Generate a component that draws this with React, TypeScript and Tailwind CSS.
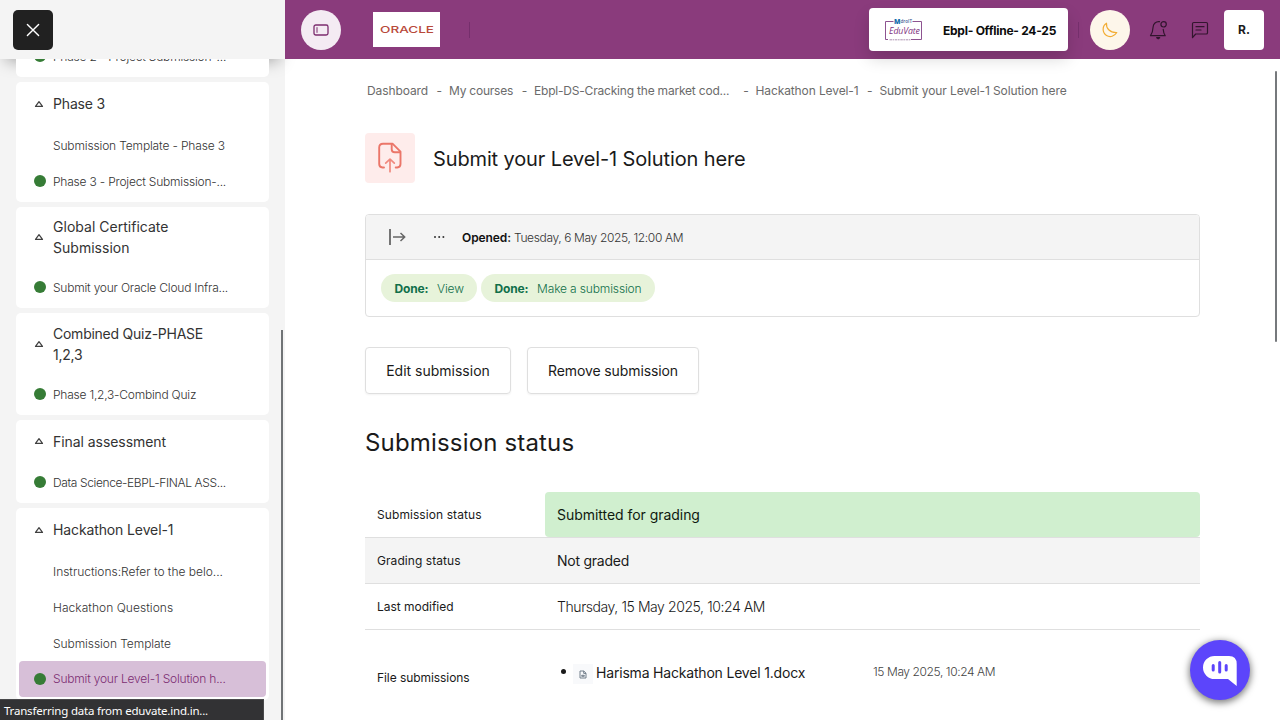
import type { ReactNode } from "react";

type Item = { text: string; track: string; done?: boolean; active?: boolean };
type Section = { title: string[]; track: string; head: string; items: Item[] };

const sections: Section[] = [
  {
    title: ["Phase 3"],
    track: "tracking-[-0.17px]",
    head: "h-[45.5px]",
    items: [
      { text: "Submission Template - Phase 3", track: "tracking-[-0.15px]" },
      { text: "Phase 3 - Project Submission-...", track: "tracking-[-0.2px]", done: true },
    ],
  },
  {
    title: ["Global Certificate", "Submission"],
    track: "tracking-[0.02px]",
    head: "h-[62.5px]",
    items: [{ text: "Submit your Oracle Cloud Infra...", track: "tracking-[-0.21px]", done: true }],
  },
  {
    title: ["Combined Quiz-PHASE", "1,2,3"],
    track: "tracking-[-0.25px]",
    head: "h-[63px]",
    items: [{ text: "Phase 1,2,3-Combind Quiz", track: "tracking-[-0.22px]", done: true }],
  },
  {
    title: ["Final assessment"],
    track: "tracking-[-0.06px]",
    head: "h-[44.5px]",
    items: [{ text: "Data Science-EBPL-FINAL ASS...", track: "tracking-[-0.38px]", done: true }],
  },
  {
    title: ["Hackathon Level-1"],
    track: "tracking-[-0.12px]",
    head: "h-[45.5px]",
    items: [
      { text: "Instructions:Refer to the belo...", track: "tracking-[-0.01px]" },
      { text: "Hackathon Questions", track: "tracking-[0.04px]" },
      { text: "Submission Template", track: "tracking-[-0.06px]" },
      { text: "Submit your Level-1 Solution h...", track: "tracking-[-0.2px]", done: true, active: true },
    ],
  },
];

function NavItem({ item }: { item: Item }) {
  return (
    <div
      className={
        "mx-[3px] flex h-[35.75px] items-center rounded pl-[15px] text-[12px] font-light whitespace-nowrap " +
        (item.active ? "bg-[#d7bfd8] text-[#7c2d72]" : "text-[#333333]")
      }
    >
      <span className="flex w-[19px] shrink-0">
        {item.done && <span className="size-3 rounded-full bg-[#367c36]" />}
      </span>
      <span className={(item.active ? "" : "pt-[2px] ") + item.track}>{item.text}</span>
    </div>
  );
}

function NavSection({ section }: { section: Section }) {
  return (
    <section className="shrink-0 rounded-[5px] bg-white pb-[3px]">
      <div className={"flex items-center pb-[2px] pl-[18px] text-[14px] leading-[21px] text-[#333333] " + section.head}>
        <svg className="mr-[9px] shrink-0" width="10" height="8" viewBox="0 0 10 8" fill="none" stroke="#404040" strokeWidth="1.2" strokeLinejoin="round">
          <path d="M5 1.7 8.5 6.4H1.5Z" />
        </svg>
        <h2 className={section.track}>
          {section.title.map((line) => (
            <span key={line} className="block">{line}</span>
          ))}
        </h2>
      </div>
      {section.items.map((item) => (
        <NavItem key={item.text} item={item} />
      ))}
    </section>
  );
}

function Sidebar() {
  return (
    <aside className="relative flex h-full w-[285px] shrink-0 flex-col bg-[#f4f4f4]">
      <div className="h-[59px] shrink-0 bg-[#f4f4f4] px-[13px] pt-[10px] shadow-[0_8px_16px_-6px_rgba(0,0,0,0.35)]">
        <button className="flex size-10 items-center justify-center rounded-[5px] bg-[#212121]">
          <svg width="14" height="14" viewBox="0 0 14 14" stroke="#fff" strokeWidth="1.4" strokeLinecap="round">
            <path d="M1.4 1.4l11.2 11.2M12.6 1.4L1.4 12.6" />
          </svg>
        </button>
      </div>
      <nav className="relative flex min-h-0 flex-1 flex-col gap-[5px] overflow-hidden pr-4 pl-4">
        <section className="-mt-[21px] shrink-0 rounded-[5px] bg-white pb-[3px]">
          <NavItem item={{ text: "Phase 2 - Project Submission-...", track: "tracking-[-0.2px]", done: true }} />
        </section>
        {sections.map((s) => (
          <NavSection key={s.title[0]} section={s} />
        ))}
      </nav>
      <div className="absolute top-[330px] right-[2px] h-[390px] w-[2px] bg-[#707376]" />
      <div className="absolute bottom-0 left-0 z-20 flex h-[21px] w-[264px] items-center border-t border-r border-[#48484a] bg-[#323234] pt-[2px] pl-1 font-['Noto_Sans',sans-serif] text-[11.5px] tracking-[-0.2px] whitespace-nowrap text-white">
        Transferring data from eduvate.ind.in...
      </div>
    </aside>
  );
}

function EduVateLogo() {
  return (
    <svg width="40" height="26" viewBox="0 0 40 26" fill="none">
      <path d="M9.500 4.500H1.500V22.500H4M27 22.500h10.500V4.500H28.500" stroke="#8d5390" strokeWidth="1" />
      <text x="10" y="6.600" fontFamily="Open Sans, sans-serif" fontSize="6.500" fontWeight="800" fill="#1670ad" textLength="6.500" lengthAdjust="spacingAndGlyphs">M</text>
      <text x="16.500" y="6.400" fontFamily="Open Sans, sans-serif" fontSize="5.800" fontWeight="600" fill="#3c5a94" textLength="11.500" lengthAdjust="spacingAndGlyphs">droIT</text>
      <text x="5" y="16.600" fontFamily="Open Sans, sans-serif" fontSize="8.800" fontStyle="italic" fill="#7e3180" textLength="31" lengthAdjust="spacing">EduVate</text>
      <path d="M5.500 22.800h21" stroke="#a487a8" strokeWidth="0.900" strokeDasharray="2.500 0.600 1.600 0.700" />
    </svg>
  );
}

function TopBar() {
  return (
    <header className="z-10 flex h-[59px] shrink-0 items-center bg-[#8a3b7c] pr-4 pl-4">
      <button className="flex size-10 items-center justify-center rounded-full bg-[#f4ebf3]">
        <svg width="16" height="12" viewBox="0 0 16 12" fill="none" stroke="#7c2d6f" strokeWidth="1.3">
          <rect x="1" y="1" width="14" height="10" rx="1.8" />
          <path d="M4 3.200v5.600" strokeWidth="1" />
        </svg>
      </button>
      <div className="ml-8 flex h-[35px] w-[67px] items-center justify-center bg-white">
        <svg width="56" height="12" viewBox="0 0 56 12">
          <text x="1" y="9.300" fontFamily="Inter, sans-serif" fontSize="9.300" fontWeight="500" fill="#b8493a" textLength="54" lengthAdjust="spacingAndGlyphs">ORACLE</text>
        </svg>
      </div>
      <div className="ml-[29px] h-4 w-px bg-[#752f6c]" />
      <div className="ml-auto flex h-[43px] w-[199px] items-center rounded bg-white pl-[15px] shadow-[0_8px_16px_rgba(0,0,0,0.15)]">
        <EduVateLogo />
        <span className="ml-[19px] pt-[2px] text-[12px] font-bold tracking-[-0.25px] whitespace-nowrap text-[#0c0c0c]">Ebpl- Offline- 24-25</span>
      </div>
      <div className="ml-[10px] h-4 w-px bg-[#752f6c]" />
      <button className="ml-[11px] flex size-10 items-center justify-center rounded-full bg-[#fdf6ea]">
        <svg width="18" height="18" viewBox="0 0 18 18" fill="none" stroke="#f2ac33" strokeWidth="1.2" strokeLinejoin="round" strokeLinecap="round">
          <path d="M5.500 2.200C5 7 8.500 11.800 15.800 11.500 13.500 15.200 9.200 16.700 5.500 14.500 1 11.700 1 5 5.500 2.200Z" />
        </svg>
      </button>
      <svg className="ml-[19px]" width="20" height="20" viewBox="0 0 20 20" fill="none" stroke="#32152e" strokeWidth="1.2" strokeLinecap="round" strokeLinejoin="round">
        <path d="M10.500 1.700C6.800 1.200 4.300 4 4.100 7 3.900 11.500 3.100 13.500 1.500 15.700H16.200C14.900 14 14.400 12 14.200 9.300" />
        <circle cx="14.600" cy="4.300" r="2.700" />
        <path d="M7.700 17.700h3L9.200 18.800Z" />
      </svg>
      <svg className="mr-px ml-[22px]" width="18" height="18" viewBox="0 0 18 18" fill="none" stroke="#32152e" strokeWidth="1.2" strokeLinecap="round" strokeLinejoin="round">
        <path d="M1.500 16.700V2.800Q1.500 1.500 2.800 1.500H15.200Q16.500 1.500 16.500 2.800V11.700Q16.500 13 15.200 13H4.700L1.500 16.700ZM5 5.700h8M5 9h5" />
      </svg>
      <div className="ml-[14px] flex size-10 items-center justify-center rounded-[4px] bg-white pt-px text-[12px] font-bold text-[#1c1c1c]">R.</div>
    </header>
  );
}

function Pill({ label, width }: { label: string; width: string }) {
  return (
    <span className={"flex h-7 items-center rounded-full bg-[#e7f3da] pt-[2px] pl-[13.5px] text-[12px] whitespace-nowrap text-[#11704a] " + width}>
      <b className="mr-[8.5px] font-bold tracking-[-0.13px]">Done:</b>
      <span className="font-light tracking-[-0.14px]">{label}</span>
    </span>
  );
}

const crumbs = [
  { text: "Dashboard", cls: "w-[82px] tracking-[-0.1px]" },
  { text: "My courses", cls: "w-[85px] tracking-[-0.23px]" },
  { text: "Ebpl-DS-Cracking the market cod...", cls: "w-[221.5px] tracking-[-0.2px]" },
  { text: "Hackathon Level-1", cls: "w-[124px] tracking-[-0.11px]" },
  { text: "Submit your Level-1 Solution here", cls: "tracking-[-0.09px]" },
];

function Breadcrumbs() {
  return (
    <div className="flex h-4 items-center pl-[2px] text-[12px] leading-4 whitespace-nowrap text-[#6b6b6b]">
      {crumbs.map((c, i) => (
        <span key={c.text} className={"flex shrink-0 justify-between pr-[7px] " + c.cls}>
          <span>{c.text}</span>
          {i < crumbs.length - 1 && <span>-</span>}
        </span>
      ))}
    </div>
  );
}

function Row({ label, track, children, shaded }: { label: string; track: string; children: ReactNode; shaded?: boolean }) {
  return (
    <div className={"flex h-[46px] border-b border-[#dfdfdf] " + (shaded ? "bg-[#f4f4f4]" : "")}>
      <div className={"flex w-[180px] shrink-0 items-center pl-3 text-[12px] font-normal text-[#1a1a1a] " + track}>{label}</div>
      {children}
    </div>
  );
}

function ChatButton() {
  return (
    <button className="absolute right-[30px] bottom-5 size-[60px] rounded-full bg-[#5c45fb] shadow-[0_2px_7px_1px_rgba(0,0,0,0.5)]">
      <svg width="60" height="60" viewBox="0 0 60 60">
        <path d="M24.500 16H39Q46.700 16 46.700 24V46L38 39H24.500A11.500 11.500 0 0 1 24.500 16Z" fill="#fff" />
        <path d="M23.200 25.500v4.500M29.700 22.500v9.500M36.200 25.500v4.500" stroke="#5c45fb" strokeWidth="3" strokeLinecap="round" />
      </svg>
    </button>
  );
}

export default function App() {
  return (
    <div className="relative flex h-[720px] w-[1280px] overflow-hidden bg-white font-['Inter',sans-serif] text-[#1a1a1a]">
      <Sidebar />
      <div className="flex min-w-0 flex-1 flex-col">
        <TopBar />
        <main className="min-h-0 flex-1 overflow-hidden px-20 pt-6">
          <Breadcrumbs />

          <div className="mt-[34px] flex items-center gap-[18px]">
            <div className="flex size-[50px] items-center justify-center rounded bg-[#feeceb]">
              <svg className="-mt-[2px]" width="26" height="32" viewBox="0 0 26 32" fill="none" stroke="#eb7669" strokeWidth="1.900" strokeLinecap="round" strokeLinejoin="round">
                <path d="M7 26.500H5.500Q2.200 26.200 2.200 23V6.500Q2.200 2.700 6 2.700H15.500L23.500 10.700V23Q23.500 26.200 20.200 26.500H18.700" />
                <path d="M14.700 3v5.200Q14.700 11.200 17.700 11.200H23" />
                <path d="M13 30.700V18.700M8.700 22.200L13 18.200l4.300 4" stroke="#f0897e" strokeWidth="1.700" />
              </svg>
            </div>
            <h1 className="pt-[2px] text-[20px] tracking-[-0.13px]">Submit your Level-1 Solution here</h1>
          </div>

          <div className="mt-[31px] h-[103px] overflow-hidden rounded border border-[#dfdfdf]">
            <div className="flex h-[45px] items-center border-b border-[#dfdfdf] bg-[#f4f4f4] pl-[22px]">
              <svg width="18" height="16" viewBox="0 0 18 16" fill="none" stroke="#666666" strokeWidth="1.5">
                <path d="M2 0v16" strokeWidth="1.8" />
                <path d="M5 8H17M12.500 4L16.700 8l-4.200 4" />
              </svg>
              <svg className="ml-[27px]" width="13" height="4" viewBox="0 0 13 4" fill="#333333">
                <circle cx="2" cy="2" r="1" />
                <circle cx="6.200" cy="2" r="1" />
                <circle cx="10.400" cy="2" r="1" />
              </svg>
              <p className="ml-[16px] pt-px text-[12px] font-light tracking-[-0.36px] whitespace-nowrap text-[#333333]">
                <b className="mr-[3px] font-semibold tracking-[-0.08px] text-[#111111]">Opened:</b>
                Tuesday, 6 May 2025, 12:00 AM
              </p>
            </div>
            <div className="flex gap-1 pt-[14px] pl-[15px]">
              <Pill label="View" width="w-24" />
              <Pill label="Make a submission" width="w-[174px]" />
            </div>
          </div>

          <div className="mt-[30px] flex gap-4 text-[14px] whitespace-nowrap">
            <button className="h-[47px] w-[146px] rounded border border-[#dfdfdf] shadow-[0_1px_2px_rgba(0,0,0,0.05)]">Edit submission</button>
            <button className="h-[47px] w-[172px] rounded border border-[#dfdfdf] tracking-[-0.1px] shadow-[0_1px_2px_rgba(0,0,0,0.05)]">Remove submission</button>
          </div>

          <h2 className="mt-[31px] h-9 text-[24px] leading-9 tracking-[0.17px]">Submission status</h2>

          <div className="mt-[31px]">
            <Row label="Submission status" track="tracking-[0.08px]">
              <div className="flex flex-1 items-center rounded bg-[#d0efcf] pl-3 text-[14px] tracking-[-0.04px] text-[#0f1a0f]">Submitted for grading</div>
            </Row>
            <Row label="Grading status" track="tracking-[0.06px]" shaded>
              <div className="flex flex-1 items-center pl-3 text-[14px] tracking-[-0.25px]">Not graded</div>
            </Row>
            <Row label="Last modified" track="tracking-[-0.02px]">
              <div className="flex flex-1 items-center pl-3 text-[14px] font-light tracking-[-0.42px]">Thursday, 15 May 2025, 10:24 AM</div>
            </Row>
            <div className="flex h-[95px]">
              <div className="flex w-[180px] shrink-0 items-center pl-3 text-[12px] tracking-[-0.07px]">File submissions</div>
              <div className="flex h-[86px] flex-1 items-center pl-4 whitespace-nowrap">
                <span className="mb-[3px] size-[5px] rounded-full bg-[#1a1a1a]" />
                <span className="mt-[2px] ml-[7px] flex size-5 items-center justify-center bg-[#f8f9fb]">
                  <svg width="8" height="9" viewBox="0 0 8 9" fill="none" stroke="#64727f" strokeWidth="0.9">
                    <path d="M1 1h3.800L7 3.200V8H1ZM4.700 1v2.400H7M2.700 5.300h2.600v1h-2.600z" />
                  </svg>
                </span>
                <span className="mb-px ml-[3px] w-[277px] text-[14px] tracking-[-0.19px]">Harisma Hackathon Level 1.docx</span>
                <span className="mb-[2px] text-[12px] font-light tracking-[-0.41px] text-[#444444]">15 May 2025, 10:24 AM</span>
              </div>
            </div>
          </div>
        </main>
      </div>
      <div className="absolute top-[71px] right-[3px] h-[271px] w-[2px] rounded-full bg-[#76797c]" />
      <ChatButton />
    </div>
  );
}
